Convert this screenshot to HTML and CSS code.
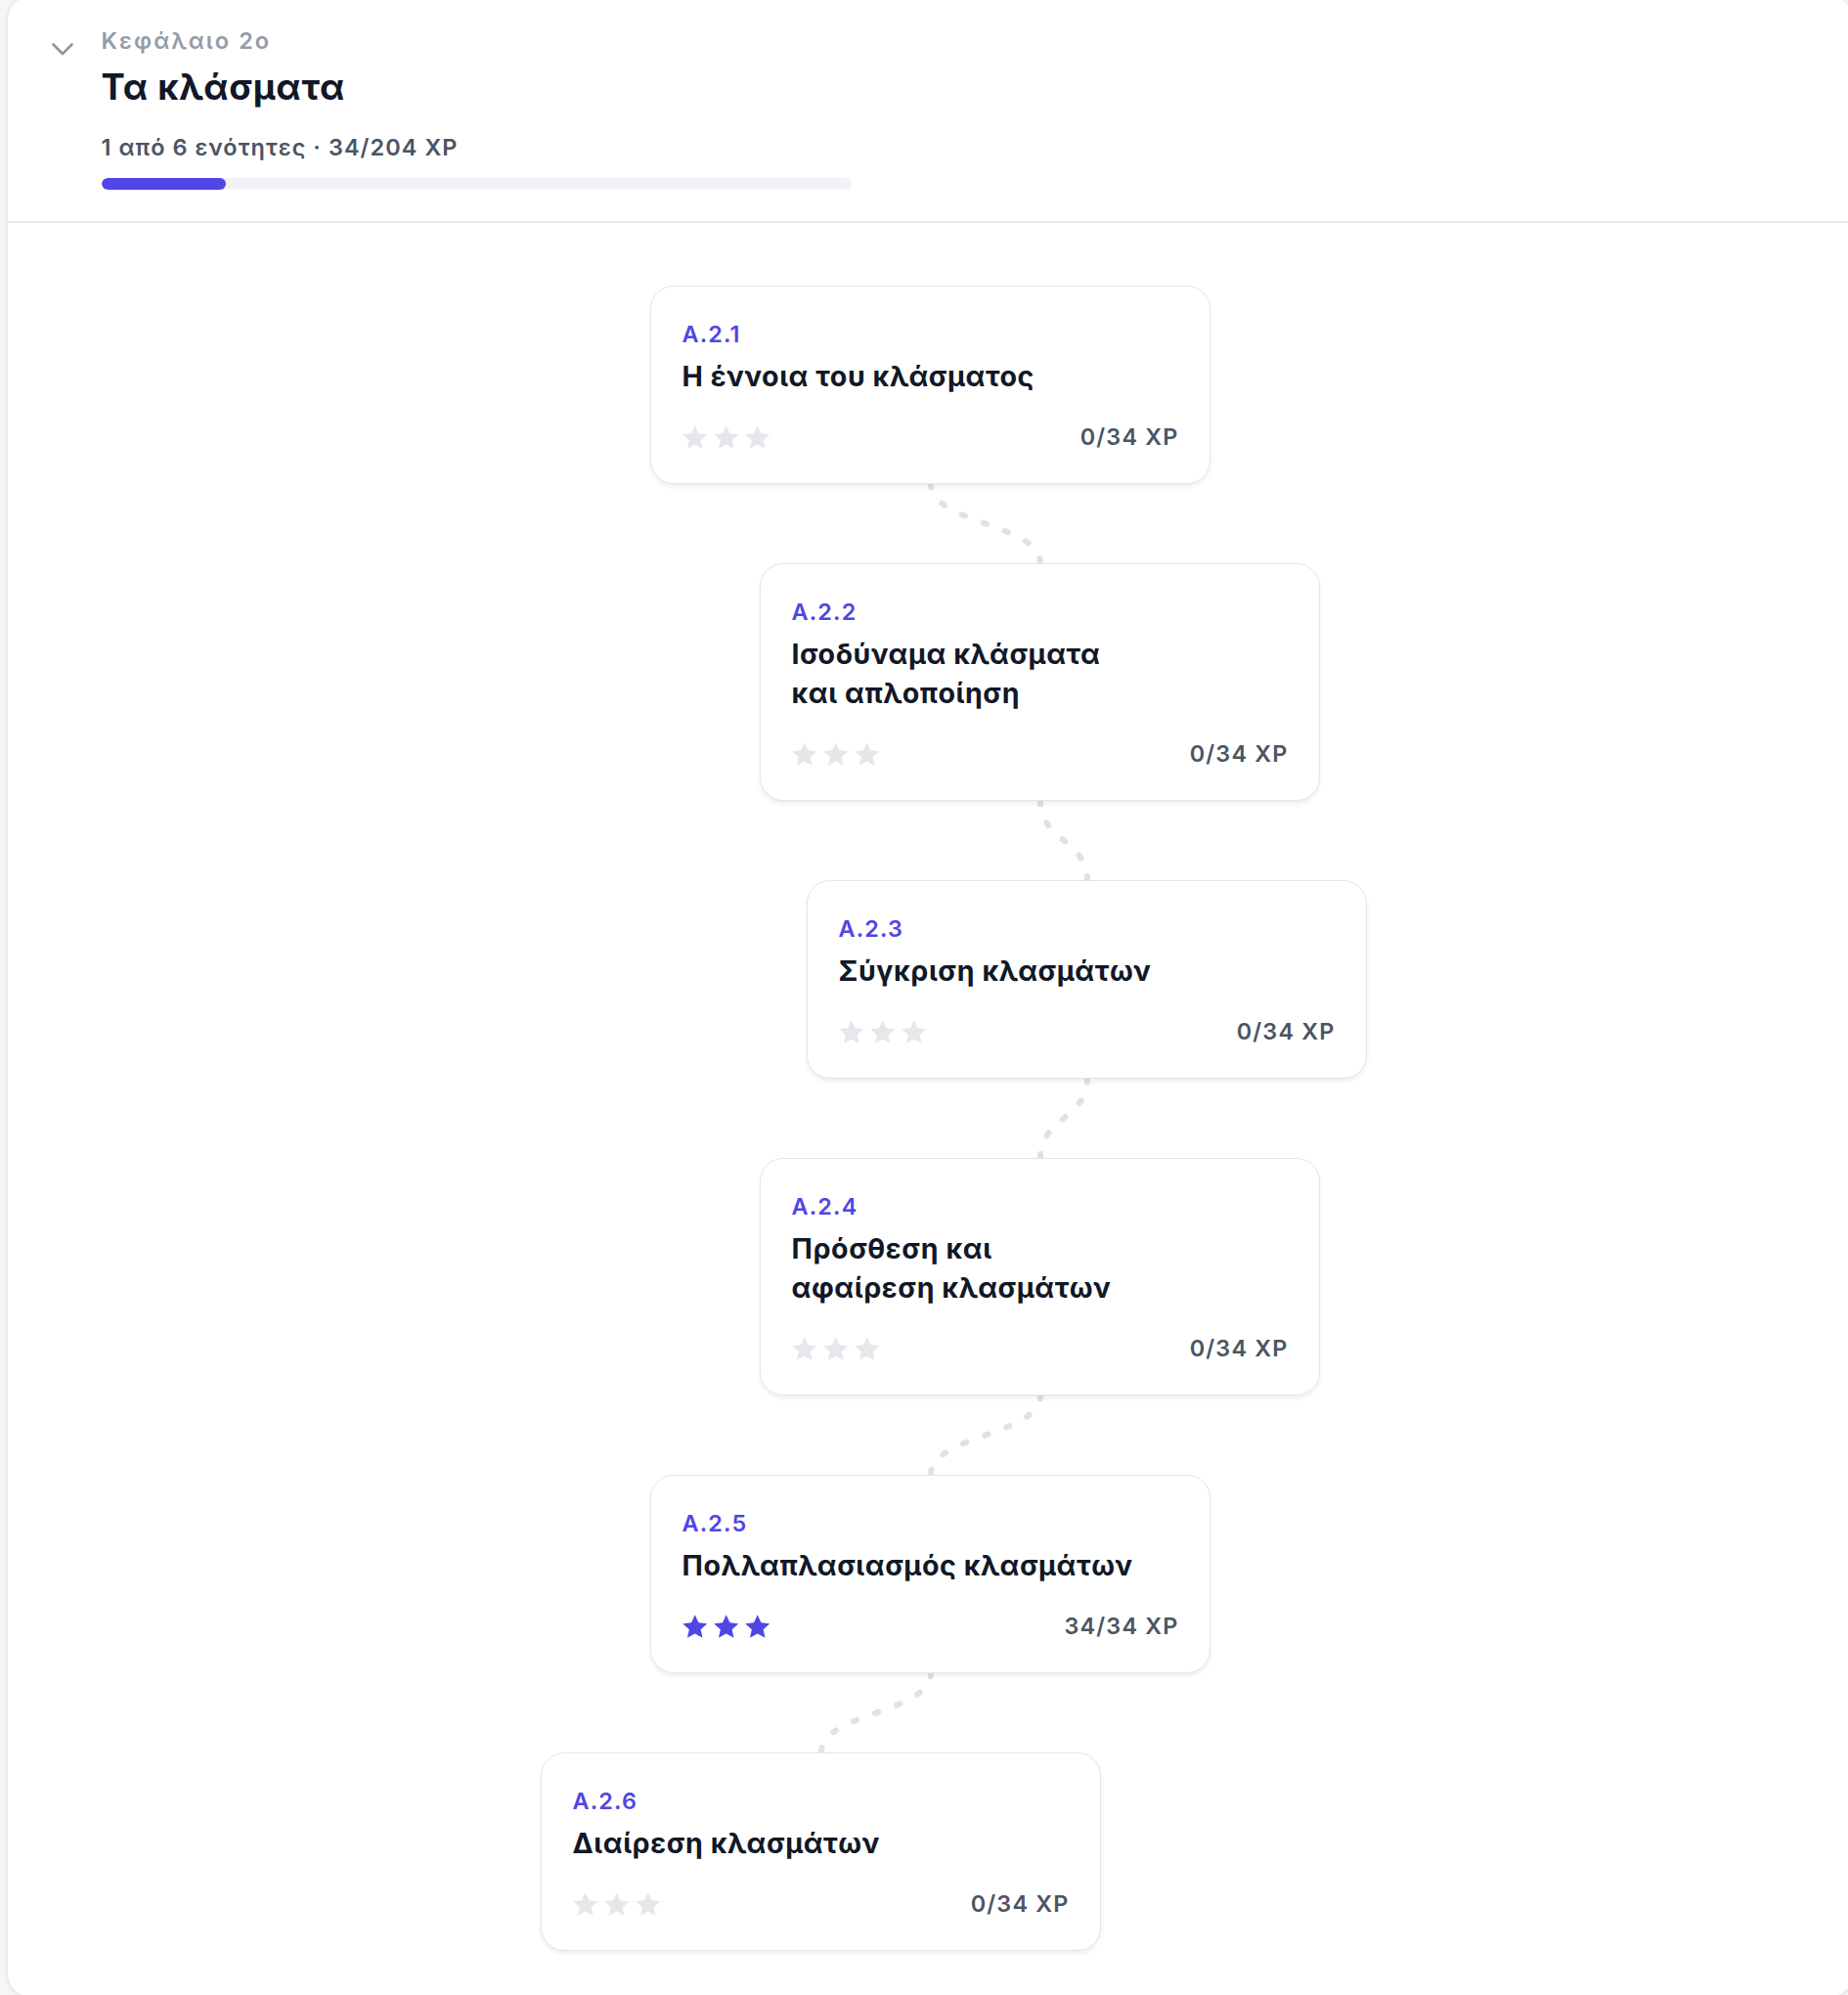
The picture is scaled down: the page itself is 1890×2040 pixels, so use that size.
FILE: index.html
```html
<!DOCTYPE html>
<html lang="el">
<head>
<meta charset="utf-8">
<title>Τα κλάσματα</title>
<link rel="stylesheet" href="styles.css">
</head>
<body>
<svg class="defs" width="0" height="0" aria-hidden="true">
  <defs>
    <symbol id="star" viewBox="1 1.2 21.6 20.4">
      <polygon points="12,1.2 15.2,8.2 22.8,9 17.1,14.1 18.7,21.6 12,17.8 5.3,21.6 6.9,14.1 1.2,9 8.8,8.2"/>
    </symbol>
  </defs>
</svg>
<div class="panel">
  <header class="chapter">
    <svg class="chev" viewBox="0 0 22 13" aria-hidden="true"><polyline points="1.5,1.5 11,11 20.5,1.5"/></svg>
    <div class="chapter-info">
      <div class="chapter-kicker">Κεφάλαιο 2ο</div>
      <h2 class="chapter-title">Τα κλάσματα</h2>
      <div class="chapter-meta">1 από 6 ενότητες · 34/204 XP</div>
      <div class="progress"><div class="progress-fill" style="width:16.67%"></div></div>
    </div>
  </header>

  <div class="path">
    <div class="card" style="--x:0px">
      <div class="card-code">A.2.1</div>
      <div class="card-title">Η έννοια του κλάσματος</div>
      <div class="card-foot">
        <div class="stars"><svg class="star"><use href="#star"/></svg><svg class="star"><use href="#star"/></svg><svg class="star"><use href="#star"/></svg></div>
        <div class="xp">0/34 XP</div>
      </div>
    </div>
    <svg class="link" viewBox="-300 0 600 81" aria-hidden="true"><path d="M0 0 C0 40.5 112 40.5 112 81"/></svg>

    <div class="card" style="--x:112px">
      <div class="card-code">A.2.2</div>
      <div class="card-title">Ισοδύναμα κλάσματα και απλοποίηση</div>
      <div class="card-foot">
        <div class="stars"><svg class="star"><use href="#star"/></svg><svg class="star"><use href="#star"/></svg><svg class="star"><use href="#star"/></svg></div>
        <div class="xp">0/34 XP</div>
      </div>
    </div>
    <svg class="link" viewBox="-300 0 600 81" aria-hidden="true"><path d="M112 0 C112 40.5 160 40.5 160 81"/></svg>

    <div class="card" style="--x:160px">
      <div class="card-code">A.2.3</div>
      <div class="card-title">Σύγκριση κλασμάτων</div>
      <div class="card-foot">
        <div class="stars"><svg class="star"><use href="#star"/></svg><svg class="star"><use href="#star"/></svg><svg class="star"><use href="#star"/></svg></div>
        <div class="xp">0/34 XP</div>
      </div>
    </div>
    <svg class="link" viewBox="-300 0 600 81" aria-hidden="true"><path d="M160 0 C160 40.5 112 40.5 112 81"/></svg>

    <div class="card" style="--x:112px">
      <div class="card-code">A.2.4</div>
      <div class="card-title">Πρόσθεση και αφαίρεση κλασμάτων</div>
      <div class="card-foot">
        <div class="stars"><svg class="star"><use href="#star"/></svg><svg class="star"><use href="#star"/></svg><svg class="star"><use href="#star"/></svg></div>
        <div class="xp">0/34 XP</div>
      </div>
    </div>
    <svg class="link" viewBox="-300 0 600 81" aria-hidden="true"><path d="M112 0 C112 40.5 0 40.5 0 81"/></svg>

    <div class="card" style="--x:0px">
      <div class="card-code">A.2.5</div>
      <div class="card-title">Πολλαπλασιασμός κλασμάτων</div>
      <div class="card-foot">
        <div class="stars done"><svg class="star"><use href="#star"/></svg><svg class="star"><use href="#star"/></svg><svg class="star"><use href="#star"/></svg></div>
        <div class="xp">34/34 XP</div>
      </div>
    </div>
    <svg class="link" viewBox="-300 0 600 81" aria-hidden="true"><path d="M0 0 C0 40.5 -112 40.5 -112 81"/></svg>

    <div class="card" style="--x:-112px">
      <div class="card-code">A.2.6</div>
      <div class="card-title">Διαίρεση κλασμάτων</div>
      <div class="card-foot">
        <div class="stars"><svg class="star"><use href="#star"/></svg><svg class="star"><use href="#star"/></svg><svg class="star"><use href="#star"/></svg></div>
        <div class="xp">0/34 XP</div>
      </div>
    </div>
  </div>
</div>
</body>
</html>
```

FILE: styles.css
```css
html, body {
  margin: 0;
  padding: 0;
  overflow: hidden;
  background: #f5f6f8;
  font-family: Inter, "Noto Sans", "Liberation Sans", sans-serif;
}

.defs {
  position: absolute;
  width: 0;
  height: 0;
  overflow: hidden;
}

.panel {
  box-sizing: border-box;
  margin: -5px 0 0 7px;
  width: 1889px;
  height: 2048px;
  background: #fff;
  border: 1.5px solid #e5e7eb;
  border-radius: 25px;
  box-shadow: 0 1px 5px rgba(17, 24, 39, 0.07);
  overflow: hidden;
}

/* Header */
.chapter {
  display: flex;
  align-items: flex-start;
  padding: 29.5px 0 32px 44.5px;
  border-bottom: 2px solid #e5e7eb;
}

.chev {
  width: 22px;
  height: 13px;
  margin-top: 18.5px;
  flex: none;
  fill: none;
  stroke: #8e95a2;
  stroke-width: 2.6;
  stroke-linecap: round;
  stroke-linejoin: round;
}

.chapter-info {
  margin-left: 29px;
}

.chapter-kicker {
  font-size: 23.4px;
  line-height: 32px;
  font-weight: 600;
  color: #959ca8;
  letter-spacing: 2.1px;
}

.chapter-title {
  margin: 9px 0 0;
  font-size: 36.4px;
  line-height: 45px;
  font-weight: 700;
  color: #111827;
  letter-spacing: 0.8px;
}

.chapter-meta {
  margin-top: 23px;
  font-size: 23.4px;
  line-height: 32px;
  font-weight: 600;
  color: #4b5563;
  letter-spacing: 1.1px;
}

.progress {
  margin-top: 15.5px;
  width: 767px;
  height: 11.7px;
  border-radius: 6px;
  background: #f1f2f6;
  overflow: hidden;
}

.progress-fill {
  height: 100%;
  border-radius: 6px;
  background: #4f46e5;
}

/* Path of lessons */
.path {
  display: flex;
  flex-direction: column;
  align-items: center;
  padding-top: 64px;
}

.card {
  box-sizing: border-box;
  width: 573px;
  padding: 33px 31.5px 35px;
  border: 1.5px solid #e3e6eb;
  border-radius: 24px;
  background: #fff;
  box-shadow: 0 3px 4px rgba(17, 24, 39, 0.07);
  transform: translateX(var(--x));
  position: relative;
  z-index: 1;
}

.card-code {
  font-size: 23.4px;
  line-height: 31px;
  font-weight: 600;
  color: #4f46e5;
  letter-spacing: 0.05em;
}

.card-title {
  margin-top: 8px;
  font-size: 28.6px;
  line-height: 40px;
  font-weight: 700;
  color: #111827;
  letter-spacing: 0.02em;
  text-wrap: balance;
}

.card-foot {
  margin-top: 30px;
  height: 24px;
  display: flex;
  align-items: center;
  justify-content: space-between;
}

.stars {
  display: flex;
  gap: 7px;
  fill: #e5e7eb;
}

.stars.done {
  fill: #4f46e5;
}

.star {
  width: 25px;
  height: 24px;
  display: block;
}

.xp {
  font-size: 23.4px;
  line-height: 24px;
  font-weight: 600;
  color: #4b5563;
  letter-spacing: 0.05em;
}

.link {
  display: block;
  width: 600px;
  height: 81px;
  overflow: visible;
  fill: none;
  stroke: #dfe2e8;
  stroke-width: 6;
  stroke-linecap: round;
  stroke-dasharray: 3.5 20;
}
```
